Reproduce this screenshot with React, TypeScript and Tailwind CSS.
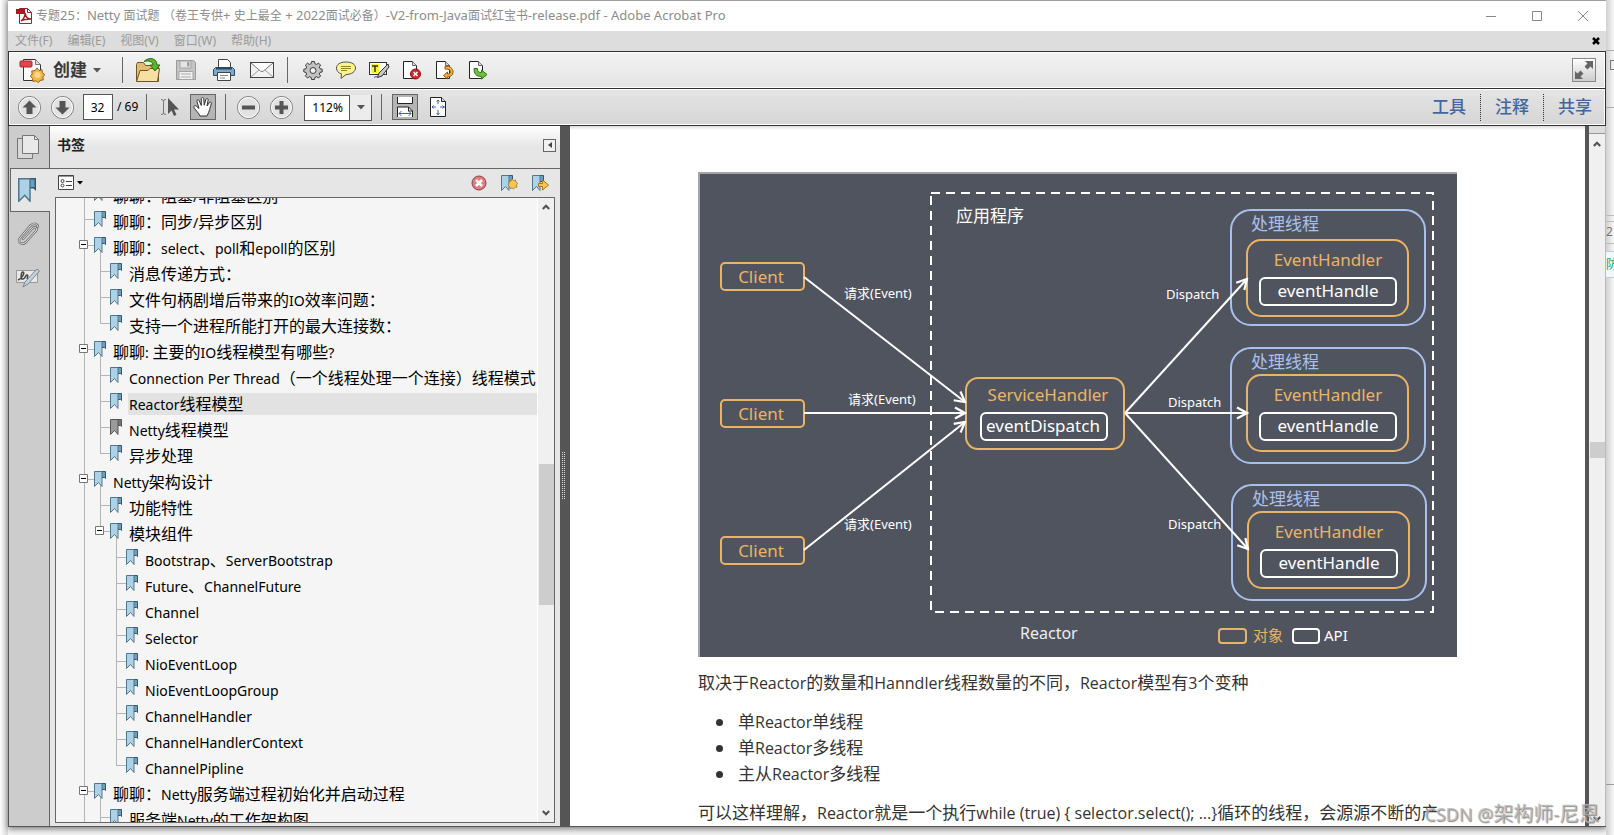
import type { ReactNode } from 'react';

interface Bookmark {
  title: string;
  depth: number;
  expanded?: boolean;
  last?: boolean;
  active?: boolean;
  muted?: boolean;
}

const MENUS = ['文件(F)', '编辑(E)', '视图(V)', '窗口(W)', '帮助(H)'];

const BOOKMARKS: Bookmark[] = [
  { title: '聊聊：阻塞/非阻塞区别', depth: 0 },
  { title: '聊聊：同步/异步区别', depth: 0 },
  { title: '聊聊：select、poll和epoll的区别', depth: 0, expanded: true },
  { title: '消息传递方式：', depth: 1 },
  { title: '文件句柄剧增后带来的IO效率问题：', depth: 1 },
  { title: '支持一个进程所能打开的最大连接数：', depth: 1, last: true },
  { title: '聊聊: 主要的IO线程模型有哪些?', depth: 0, expanded: true },
  { title: 'Connection Per Thread（一个线程处理一个连接）线程模式', depth: 1 },
  { title: 'Reactor线程模型', depth: 1, active: true },
  { title: 'Netty线程模型', depth: 1, muted: true },
  { title: '异步处理', depth: 1, last: true },
  { title: 'Netty架构设计', depth: 0, expanded: true },
  { title: '功能特性', depth: 1 },
  { title: '模块组件', depth: 1, expanded: true, last: true },
  { title: 'Bootstrap、ServerBootstrap', depth: 2 },
  { title: 'Future、ChannelFuture', depth: 2 },
  { title: 'Channel', depth: 2 },
  { title: 'Selector', depth: 2 },
  { title: 'NioEventLoop', depth: 2 },
  { title: 'NioEventLoopGroup', depth: 2 },
  { title: 'ChannelHandler', depth: 2 },
  { title: 'ChannelHandlerContext', depth: 2 },
  { title: 'ChannelPipline', depth: 2, last: true },
  { title: '聊聊：Netty服务端过程初始化并启动过程', depth: 0, expanded: true },
  { title: '服务端Netty的工作架构图', depth: 1 },
];

const VARIANTS = ['单Reactor单线程', '单Reactor多线程', '主从Reactor多线程'];

/* Latin runs get their own size next to the Han glyphs around them */
function MixedText({ text, latin }: { text: string; latin: string }) {
  return text.split(/([\x20-\x7e]+)/).map((part, i) =>
    i % 2 ? <span key={i} className={latin}>{part}</span> : part,
  );
}

/* ---------- icons ---------- */

function PdfIcon() {
  return (
    <svg width="16" height="16" viewBox="0 0 16 16">
      <path d="M3.500.5h8l4 4v11h-12z" fill="#fff" stroke="#8f2a30" />
      <path d="M11.500.5v4h4" fill="none" stroke="#8f2a30" />
      <path d="M0 1h9v5H0z" fill="#b3141d" />
      <path d="M5 13c3-2 4-5 4-8 1 4 2 6 6 6-4 0-7 0-10 2z" fill="none" stroke="#b3141d" strokeWidth="1.300" />
    </svg>
  );
}

function CreateIcon() {
  return (
    <svg width="26" height="26" viewBox="0 0 26 26">
      <path d="M4.500 2.500h12l5 5v16h-17z" fill="#fafafa" stroke="#333" />
      <path d="M16.500 2.500v5h5" fill="#ddd" stroke="#777" />
      <rect x="1" y="4" width="12" height="6" rx="1" fill="#e0474c" stroke="#b3242a" />
      <path d="m18 11 2 2.500 3-.8.300 3 2.500 1.800-2 2.500.5 3-3 .2-1.800 2.300-2.600-1.600-3 .5-.3-3-2.200-2 1.800-2.400-.5-3 3.200-.3z" fill="#f2b84c" stroke="#9a5f10" />
      <circle cx="18.500" cy="18" r="3" fill="#fbd98a" />
    </svg>
  );
}

function OpenIcon() {
  return (
    <svg width="26" height="26" viewBox="0 0 26 26">
      <path d="M1.500 24.500v-17l1-2h6l2 3h13v16z" fill="#e2bd72" stroke="#6e5426" />
      <path d="M1.500 24.500 5 13.500h8l2-2h9.500l-2 13z" fill="#f7dfa4" stroke="#6e5426" />
      <path d="M9 4.500c5-5 13-3.500 13 3.500h3l-5 6-5-6h3c0-3-4-5-9-3.500z" fill="#5cb531" stroke="#2b6a12" />
    </svg>
  );
}

function SaveIcon() {
  return (
    <svg width="22" height="22" viewBox="0 0 22 22">
      <path d="M1.500 1.500h17l2 2v17h-19z" fill="#c4c4c4" stroke="#9a9a9a" />
      <path d="M5 2h11v7H5z" fill="#e6e6e6" stroke="#a5a5a5" />
      <path d="M12 3h2.500v4.500H12z" fill="#a0a0a0" />
      <path d="M4 12.500h14v8H4z" fill="#f0f0f0" stroke="#a5a5a5" />
      <path d="M6 15h10M6 18h10" stroke="#aaa" />
    </svg>
  );
}

function PrintIcon() {
  return (
    <svg width="24" height="24" viewBox="0 0 24 24">
      <path d="M6.500 10V1.500h9l3 3V10" fill="#fff" stroke="#444" />
      <path d="M1.500 17.500v-6l2-2h17l2 2v6z" fill="#7ba8cf" stroke="#2e4c66" />
      <path d="M4 9.500h16v2H4z" fill="#31465a" />
      <path d="M5.500 14.500h13v8h-13z" fill="#fff" stroke="#444" />
      <path d="M8 17.500h8M8 20h5" stroke="#888" />
    </svg>
  );
}

function MailIcon() {
  return (
    <svg width="26" height="20" viewBox="0 0 26 20">
      <rect x="1.500" y="2.500" width="23" height="15" fill="#f2f2f2" stroke="#444" />
      <path d="m2 17 9-8m13 8-9-8" stroke="#999" />
      <path d="m2 3 9.500 8q1.500 1 3 0L24 3" fill="#fff" stroke="#777" />
    </svg>
  );
}

function GearIcon() {
  return (
    <svg width="20" height="20" viewBox="0 0 20 20">
      <g fill="#c2c2c2" stroke="#3c3c3c">
        <path d="M8.500 1.500h3l.4 2.200 1.700.7 1.900-1.300 2.100 2.100-1.300 1.900.7 1.600 2.200.5v2.700l-2.200.5-.7 1.600 1.300 1.900-2.100 2.100-1.900-1.300-1.700.7-.4 2.100h-3l-.4-2.100-1.700-.7-1.900 1.300-2.100-2.100 1.300-1.900-.7-1.600-2.200-.5V9.200L3 8.700l.7-1.600-1.300-1.900 2.100-2.100 1.900 1.300 1.700-.7z" />
        <circle cx="10" cy="10.500" r="3" fill="#f0f0f0" />
      </g>
    </svg>
  );
}

function CommentIcon() {
  return (
    <svg width="22" height="20" viewBox="0 0 22 20">
      <path d="M11 2c6 0 9.500 2.500 9.500 6s-3.500 6.500-9.500 6.500L6 18.500l.5-4.600C3 13 1.500 10.700 1.500 8 1.500 4.500 5 2 11 2z" fill="#fdf38a" stroke="#555" />
      <path d="M6 6.500h10M6 8.500h10M6 10.500h6" stroke="#8c8530" />
    </svg>
  );
}

function HighlightIcon() {
  return (
    <svg width="22" height="20" viewBox="0 0 22 20">
      <rect x="1.500" y="2.500" width="17" height="12" fill="#fff" stroke="#333" />
      <path d="M3 4h8v9H3z" fill="#fdf22f" />
      <path d="M4 6h6M7 6v6" stroke="#333" strokeWidth="1.500" />
      <path d="m20 4-9 9-1.500 4.500L14 16l7-9z" fill="#c6c6c6" stroke="#333" />
      <path d="M6 17.500q2-2 4 0" stroke="#555" fill="none" />
    </svg>
  );
}

function DocIcon({ children }: { children: ReactNode }) {
  return (
    <svg width="20" height="20" viewBox="0 0 20 20">
      <path d="M1.500 1.500h9l4 4v13h-13z" fill="#fff" stroke="#222" />
      <path d="M10.500 1.500v4h4" fill="#ddd" stroke="#666" />
      {children}
    </svg>
  );
}

function RoundIcon({ d }: { d: string }) {
  return (
    <svg width="25" height="25" viewBox="0 0 25 25">
      <circle cx="12.500" cy="12.500" r="11" fill="#e2e2e2" stroke="#777" />
      <circle cx="12.500" cy="12.500" r="10" fill="none" stroke="#fff" />
      <path d={d} fill="#555" />
    </svg>
  );
}

function CursorIcon() {
  return (
    <svg width="20" height="22" viewBox="0 0 20 22">
      <path d="M1 3.500q2.500 0 2.500 1.500v12q0 1.500-2.500 1.500M6 3.500Q3.500 3.500 3.500 5v12q0 1.500 2.500 1.500" fill="none" stroke="#777" />
      <path d="M8 2v16l3.500-3.500L14 20l2.500-1.200L14 13.500h5z" fill="#555" />
    </svg>
  );
}

function HandIcon() {
  return (
    <svg width="22" height="22" viewBox="0 0 22 22">
      <path
        d="M8 20c-1-3-4-5-6-8.500-.8-1.500 1-2.500 2.300-1.300L7 12.500 5 5.500c-.5-2 1.500-2.500 2.200-.8L9.300 9.500V3c0-2 2.300-2 2.500 0l.4 6.200 1.600-5.500c.5-1.900 2.600-1.400 2.300.5L15 10l2.200-3.200c1-1.500 2.700-.5 2.100 1-1 3-2 8-4.300 12.200z"
        fill="#fff"
        stroke="#333"
      />
    </svg>
  );
}

function FitWidthIcon() {
  return (
    <svg width="20" height="22" viewBox="0 0 20 22">
      <path d="M2.500 1v6.500h15V1" fill="#fff" stroke="#222" />
      <path d="M2.500 21v-10h11l4 4v6" fill="#fff" stroke="#222" />
      <path d="M13.500 11v4h4" fill="none" stroke="#222" />
      <path d="M4 17.500h12M6.500 15 4 17.500 6.500 20M13.500 15l2.500 2.500-2.500 2.500" fill="none" stroke="#3f5fb0" />
    </svg>
  );
}

function FitPageIcon() {
  return (
    <svg width="20" height="22" viewBox="0 0 20 22">
      <path d="M2.500 1.500h11l4 4v15h-15z" fill="#fff" stroke="#222" />
      <path d="M13.500 1.500v4h4" fill="#ddd" stroke="#222" />
      <path d="M10 4v4m0 6v5M4 11h4m4 0h5M8.500 5.500 10 4l1.500 1.500M8.500 17l1.500 1.500 1.500-1.500M5.500 9.500 4 11l1.500 1.500M14.500 9.500 16 11l-1.500 1.500" fill="none" stroke="#3f5fb0" />
    </svg>
  );
}

function ExpandIcon() {
  return (
    <svg width="22" height="22" viewBox="0 0 22 22">
      <path d="M12 2h8v8l-2.500-2.500-3 3-3-3 3-3zM2 12v8h8l-2.500-2.500 3-3-3-3-3 3z" fill="#666" />
    </svg>
  );
}

function Ribbon({ muted = false }: { muted?: boolean }) {
  return (
    <>
      <path d="M7 .5h4.500v7l-1-1H7z" fill={muted ? '#777' : '#6a9fc0'} stroke={muted ? '#555' : '#34566e'} />
      <path d="M.5 15.500V.5H8v15l-3.500-4z" fill={muted ? '#9b9b9b' : '#add2e8'} stroke={muted ? '#555' : '#51778f'} />
    </>
  );
}

function Caret() {
  return (
    <svg width="8" height="5" viewBox="0 0 8 5">
      <path d="M0 0h8L4 4.500z" fill="#555" />
    </svg>
  );
}

function Chevron({ down = false }: { down?: boolean }) {
  return (
    <svg width="8" height="6" viewBox="0 0 8 6">
      <path d={down ? 'M.8 1 4 4.300 7.200 1' : 'M.8 5 4 1.700 7.200 5'} fill="none" stroke="#505050" strokeWidth="2" />
    </svg>
  );
}

/* ---------- window chrome ---------- */

function TitleBar() {
  return (
    <header className="flex h-[31px] shrink-0 items-center border-t border-[#a0a0a0] bg-white pl-2">
      <PdfIcon />
      <h1 className="ml-1 grow truncate text-xs text-[#8c8c8c]">
        <MixedText
          text="专题25：Netty 面试题 （卷王专供+ 史上最全 + 2022面试必备）-V2-from-Java面试红宝书-release.pdf - Adobe Acrobat Pro"
          latin="text-[13px]"
        />
      </h1>
      <button aria-label="最小化" className="flex h-full w-[46px] items-center justify-center">
        <svg width="10" height="10"><path d="M0 5.500h10" stroke="#888" /></svg>
      </button>
      <button aria-label="最大化" className="flex h-full w-[46px] items-center justify-center">
        <svg width="10" height="10"><path d="M.5.5h9v9h-9z" fill="none" stroke="#888" /></svg>
      </button>
      <button aria-label="关闭" className="flex h-full w-[46px] items-center justify-center">
        <svg width="10" height="10"><path d="m0 0 10 10M10 0 0 10" stroke="#888" /></svg>
      </button>
    </header>
  );
}

function MenuBar() {
  return (
    <nav className="flex h-5 shrink-0 items-center gap-[15px] bg-[#ddd] pl-[7px] pr-[6px] text-xs text-[#9b9b9b]">
      {MENUS.map((menu) => (
        <button key={menu}>{menu}</button>
      ))}
      <button aria-label="关闭文档" className="ml-auto">
        <svg width="8" height="8"><path d="m1 1 6 6M7 1 1 7" stroke="#000" strokeWidth="2.500" /></svg>
      </button>
    </nav>
  );
}

function ToolButton({ label, children, wide = false, pressed = false }: { label: string; children: ReactNode; wide?: boolean; pressed?: boolean }) {
  return (
    <button aria-label={label} className={`flex shrink-0 justify-center ${wide ? 'w-[38px]' : 'w-[33px]'}`}>
      {pressed ? (
        <span className="flex size-[26px] items-center justify-center border border-[#666] bg-[#b4b4b4]">{children}</span>
      ) : (
        children
      )}
    </button>
  );
}

function Separator() {
  return <span className="h-[26px] w-px shrink-0 bg-[#666]" />;
}

function MainToolbar() {
  return (
    <div className="flex h-[36px] items-center border border-white bg-linear-to-b from-[#f3f3f3] to-[#e4e4e4] pl-[9px] pr-2">
      <button className="flex w-[103px] items-center text-[17px] font-bold text-[#3a3a3a]">
        <CreateIcon />
        <span className="ml-2 mr-[6px]">创建</span>
        <Caret />
      </button>
      <Separator />
      <div className="flex items-center px-[6px]">
        <ToolButton label="打开" wide><OpenIcon /></ToolButton>
        <ToolButton label="保存" wide><SaveIcon /></ToolButton>
        <ToolButton label="打印" wide><PrintIcon /></ToolButton>
        <ToolButton label="电子邮件" wide><MailIcon /></ToolButton>
      </div>
      <Separator />
      <div className="flex items-center pl-2">
        <ToolButton label="设置"><GearIcon /></ToolButton>
        <ToolButton label="附注"><CommentIcon /></ToolButton>
        <ToolButton label="高亮文本"><HighlightIcon /></ToolButton>
        <ToolButton label="删除页面">
          <DocIcon>
            <circle cx="13.500" cy="14" r="5" fill="#d8252c" stroke="#8a1015" />
            <path d="m11.500 12 4 4m0-4-4 4" stroke="#fff" strokeWidth="1.500" />
          </DocIcon>
        </ToolButton>
        <ToolButton label="旋转页面">
          <DocIcon>
            <path d="M10 6.500c5-1 8 2 8 5.500s-3 5-5.500 4.800V19L8.500 15.500l4-3.500v2c2 .2 3-.8 3-2.200 0-2-2-3-5.500-2.800z" fill="#f3b13c" stroke="#8f5a0c" />
          </DocIcon>
        </ToolButton>
        <ToolButton label="提取页面">
          <DocIcon>
            <path d="M6 8.500h3.500c0 3 1 4 4 4v-2.500l5.500 4.500-5.500 4.500v-2.500C8 16.500 6 13.500 6 8.500z" fill="#6cc03c" stroke="#2f6e14" />
          </DocIcon>
        </ToolButton>
      </div>
      <button aria-label="阅读模式" className="ml-auto border border-[#888] bg-linear-to-b from-white to-[#ccc]">
        <ExpandIcon />
      </button>
    </div>
  );
}

function PageToolbar() {
  return (
    <div className="flex h-[36px] items-center border border-white bg-linear-to-b from-[#e4e4e4] to-[#d6d6d6] pl-[3px] pr-3">
      <ToolButton label="上一页"><RoundIcon d="m12.500 5.500 7 7h-4V19h-6v-6.500h-4z" /></ToolButton>
      <ToolButton label="下一页"><RoundIcon d="m12.500 19.500 7-7h-4V6h-6v6.500h-4z" /></ToolButton>
      <label className="ml-1 mr-2 flex items-center gap-1 text-xs text-black">
        <input aria-label="页码" defaultValue="32" className="h-[26px] w-[30px] border border-[#555] bg-white pr-px text-center" />
        / 69
      </label>
      <Separator />
      <div className="flex items-center px-[6px]">
        <ToolButton label="选择工具"><CursorIcon /></ToolButton>
        <ToolButton label="手形工具" pressed><HandIcon /></ToolButton>
      </div>
      <Separator />
      <div className="flex items-center px-[6px]">
        <ToolButton label="缩小"><RoundIcon d="M6 10.500h13v4H6z" /></ToolButton>
        <ToolButton label="放大"><RoundIcon d="M6 10.500h4.500V6h4v4.500H19v4h-4.500V19h-4v-4.500H6z" /></ToolButton>
      </div>
      <div className="relative mr-[9px]">
        <select aria-label="缩放" defaultValue="112" className="h-[26px] w-[68px] appearance-none border border-[#555] bg-white pl-[7px] text-xs text-black">
          <option value="112">112%</option>
        </select>
        <span className="pointer-events-none absolute inset-y-px right-px flex w-[22px] items-center justify-center border-l border-[#555] bg-[#ececec]">
          <Caret />
        </span>
      </div>
      <Separator />
      <div className="flex items-center pl-[6px]">
        <ToolButton label="适合宽度" pressed><FitWidthIcon /></ToolButton>
        <ToolButton label="适合页面"><FitPageIcon /></ToolButton>
      </div>
      <div className="ml-auto flex items-center gap-[14px] text-[17px] font-medium text-[#44679b]">
        <button>工具</button>
        <span className="h-[27px] border-l border-dotted border-[#333]" />
        <button>注释</button>
        <span className="h-[27px] border-l border-dotted border-[#333]" />
        <button>共享</button>
      </div>
    </div>
  );
}

/* ---------- navigation pane ---------- */

function Rail() {
  return (
    <div className="flex w-[41px] shrink-0 flex-col border-r border-[#666] bg-[#ccc] pl-px">
      <button aria-label="页面缩略图" className="flex h-[42px] items-center justify-center pr-[3px]">
        <svg width="22" height="24" viewBox="0 0 22 24">
          <path d="M.5 3.500h15v20H.5z" fill="#d8d8d8" stroke="#777" />
          <path d="M5.500.5h12l4 4v14h-16z" fill="#e9e9e9" stroke="#777" />
          <path d="M17.500.5v4h4" fill="none" stroke="#777" />
        </svg>
      </button>
      <button aria-label="书签" className="-mr-px flex h-[44px] items-center border border-r-0 border-[#666] bg-[#e6e6e6] pl-[7px]">
        <svg width="18" height="24" viewBox="0 0 12 16"><Ribbon /></svg>
      </button>
      <button aria-label="附件" className="flex h-[44px] items-center justify-center pr-[3px]">
        <svg width="22" height="24" viewBox="0 0 22 24" fill="none" strokeLinecap="round">
          <path d="m6 17 10-11c2-2 5 .5 3 3L9 20c-4 4-9 0-6-4L13 4c4-4 8-2 8 1" stroke="#777" strokeWidth="2.500" />
          <path d="m6 17 10-11c2-2 5 .5 3 3L9 20c-4 4-9 0-6-4L13 4c4-4 8-2 8 1" stroke="#ddd" />
        </svg>
      </button>
      <button aria-label="签名" className="flex h-[44px] items-center justify-center pr-[3px]">
        <svg width="24" height="20" viewBox="0 0 24 20">
          <path d="M.5 2.500h21v12H.5z" fill="#e8e8e8" stroke="#999" />
          <path d="M2 12c5-2 7-8 5-8s-3 8 0 7 2-4 4-4-1 4 1 4" fill="none" stroke="#444" strokeWidth="1.500" />
          <path d="m21 1 2.500 2L12 16l-5 3 2-5z" fill="#c4d3dc" stroke="#758793" />
        </svg>
      </button>
    </div>
  );
}

/* one 16px column of the connector lines in front of a bookmark */
function Connector({ own, last, visible, expanded }: { own: boolean; last: boolean; visible: boolean; expanded: boolean }) {
  return (
    <svg width="16" height="26" viewBox="0 0 16 26" className="shrink-0">
      {visible && <path d={own ? `M6.500 0V${last ? 11 : 26}M6 10.500h10` : 'M6.500 0v26'} fill="none" stroke="#b4b4b4" />}
      {own && expanded && (
        <>
          <path d="M1.500 5.500h8v8h-8z" fill="#fff" stroke="#777" />
          <path d="M3 9.500h5" stroke="#000" />
        </>
      )}
    </svg>
  );
}

function BookmarkRow({ item }: { item: Bookmark }) {
  const columns = Array.from({ length: item.depth + 1 }, (_, i) => i);

  return (
    <li className="flex h-[26px] shrink-0 items-center">
      {columns.map((col) => (
        <Connector
          key={col}
          own={col === item.depth}
          last={!!item.last}
          visible={col === 0 || col === item.depth}
          expanded={!!item.expanded}
        />
      ))}
      <svg width="13" height="26" viewBox="0 0 13 26" className="shrink-0">
        {item.expanded && <path d="M6.500 15v11" stroke="#b4b4b4" />}
        <g transform="translate(0 2)"><Ribbon muted={item.muted} /></g>
      </svg>
      <a
        href="#"
        className={`ml-[5px] flex h-[22px] grow items-center overflow-hidden whitespace-nowrap pl-px ${item.active ? 'bg-[#e2e2e2]' : ''}`}
      >
        <span><MixedText text={item.title} latin="text-sm" /></span>
      </a>
    </li>
  );
}

function BookmarksPane() {
  return (
    <aside className="flex w-[510px] shrink-0 flex-col bg-[#e6e6e6]">
      <div className="flex h-[43px] shrink-0 items-center justify-between border-b border-[#666] bg-linear-to-b from-white via-[#e6e6e6] to-[#e4e4e4] pb-[4px] pl-[7px] pr-1">
        <h2 className="text-sm font-bold text-[#222]">书签</h2>
        <button aria-label="折叠" className="flex size-[13px] items-center justify-center border border-[#666] bg-[#f0f0f0]">
          <svg width="4" height="6"><path d="M4 0v6L0 3z" fill="#444" /></svg>
        </button>
      </div>
      <div className="flex h-[28px] shrink-0 items-center pl-2 pr-[11px]">
        <button aria-label="选项" className="flex items-center gap-[3px]">
          <svg width="16" height="16" viewBox="0 0 16 16">
            <path d="M.5.5h15v14H.5z" fill="#fff" stroke="#444" />
            <path d="M1 1.500h14" stroke="#999" />
            <circle cx="4.500" cy="6" r="1.500" fill="none" stroke="#444" />
            <circle cx="4.500" cy="10.500" r="1.500" fill="none" stroke="#444" />
            <path d="M8 6.500h6M8 10.500h6" stroke="#444" />
          </svg>
          <svg width="6" height="4"><path d="M0 0h6L3 3.500z" fill="#000" /></svg>
        </button>
        <div className="ml-auto flex items-center gap-[14px]">
          <button aria-label="删除书签">
            <svg width="16" height="16" viewBox="0 0 16 16">
              <circle cx="8" cy="8" r="7" fill="#e27c80" stroke="#8c4144" />
              <path d="m5 5 6 6m0-6-6 6" stroke="#fff" strokeWidth="2.500" />
            </svg>
          </button>
          <button aria-label="新建书签">
            <svg width="17" height="17" viewBox="0 0 17 17">
              <Ribbon />
              <path d="m11 4 1.500 1.500 2-.5.3 2 1.700 1.300-1 1.700.5 2-2 .3L12.500 14 11 13l-2 .5-.5-2L7 10l1-1.500-.2-2L10 6z" fill="#f6c650" stroke="#a5741a" strokeWidth=".8" />
            </svg>
          </button>
          <button aria-label="展开当前书签">
            <svg width="17" height="17" viewBox="0 0 17 17">
              <Ribbon />
              <path d="M6.500 8.500h4V5l6 5-6 5v-3.500h-4z" fill="#f6c650" stroke="#a5741a" />
            </svg>
          </button>
        </div>
      </div>
      <div className="mx-[5px] mb-[3px] flex min-h-0 grow border border-[#666] bg-[#f5f5f5]">
        <div className="min-w-0 grow overflow-hidden border-r border-white">
          <ul className="-mt-[15px] flex flex-col pl-[22px] text-base text-black">
            {BOOKMARKS.map((item) => (
              <BookmarkRow key={item.title} item={item} />
            ))}
          </ul>
        </div>
        <div className="flex w-4 shrink-0 flex-col items-center bg-[#f0f0f0] py-[6px]">
          <Chevron />
          <span className="grow-[252]" />
          <span className="h-[141px] w-[15px] bg-[#cdcdcd]" />
          <span className="grow-[204]" />
          <Chevron down />
        </div>
      </div>
    </aside>
  );
}

function Splitter() {
  return (
    <div className="flex w-[10px] shrink-0 items-center bg-[#555] pl-[2px]">
      <svg width="4" height="48">
        <path d="M.5 0v48M2.500 0v48" stroke="#ddd" strokeDasharray="1 1" />
      </svg>
    </div>
  );
}

/* ---------- document ---------- */

function ClientNode({ y }: { y: number }) {
  return (
    <g>
      <rect x="23" y={y} width="83" height="27" rx="4" fill="none" stroke="#e9b465" strokeWidth="2" />
      <text x="63" y={y + 20} fill="#e9b465" textAnchor="middle">Client</text>
    </g>
  );
}

function ThreadNode({ x, y, top }: { x: number; y: number; top: number }) {
  return (
    <g fill="none" strokeWidth="2">
      <rect x={x} y={y} width="194" height="115" rx="20" stroke="#a9c0ee" />
      <text x={x + 20} y={y + 20} fill="#a9c0ee">处理线程</text>
      <rect x={x + 16} y={top} width="161" height="76" rx="14" stroke="#e9b465" />
      <text x={x + 97} y={top + 26} fill="#e9b465" textAnchor="middle">EventHandler</text>
      <rect x={x + 29} y={top + 38} width="136" height="27" rx="5" stroke="#fff" />
      <text x={x + 97} y={top + 57} fill="#fff" textAnchor="middle">eventHandle</text>
    </g>
  );
}

function ReactorDiagram() {
  return (
    <svg viewBox="0 0 759 485" className="block w-full bg-[#50545f] font-['Noto_Sans','Noto_Sans_CJK_SC',sans-serif] text-[17px] [&_text]:stroke-none">
      <defs>
        <marker id="arrow" viewBox="0 0 14 14" markerWidth="14" markerHeight="14" refX="12" refY="7" orient="auto" markerUnits="userSpaceOnUse">
          <path d="M2 1.500 12 7 2 12.500" fill="none" stroke="#fff" strokeWidth="2.200" />
        </marker>
      </defs>
      <path d="M1 485V1h758" fill="none" stroke="#a2a4aa" strokeWidth="2" />
      <rect x="233" y="21" width="502" height="419" fill="none" stroke="#fff" strokeWidth="2" strokeDasharray="9 6" />
      <text x="258" y="50" fill="#fff">应用程序</text>

      <ClientNode y={91} />
      <ClientNode y={228} />
      <ClientNode y={365} />

      <rect x="268" y="206" width="158" height="71" rx="12" fill="none" stroke="#e9b465" strokeWidth="2" />
      <text x="350" y="229" fill="#e9b465" textAnchor="middle">ServiceHandler</text>
      <rect x="283" y="241" width="126" height="27" rx="5" fill="none" stroke="#fff" strokeWidth="2" />
      <text x="345" y="260" fill="#fff" textAnchor="middle">eventDispatch</text>

      <ThreadNode x={533} y={38} top={68} />
      <ThreadNode x={533} y={176} top={203} />
      <ThreadNode x={534} y={313} top={340} />

      <g stroke="#fff" strokeWidth="2">
        <path d="m106 105 161 125" markerEnd="url(#arrow)" />
        <path d="M106 241h161" markerEnd="url(#arrow)" />
        <path d="m106 378 161-128" markerEnd="url(#arrow)" />
        <path d="m427 241 122-134" markerEnd="url(#arrow)" />
        <path d="M427 241h122" markerEnd="url(#arrow)" />
        <path d="m427 241 123 136" markerEnd="url(#arrow)" />
      </g>

      <g fill="#fff" className="text-[13px]">
        <text x="146" y="126">请求(Event)</text>
        <text x="150" y="232">请求(Event)</text>
        <text x="146" y="357">请求(Event)</text>
        <text x="468" y="127">Dispatch</text>
        <text x="470" y="235">Dispatch</text>
        <text x="470" y="357">Dispatch</text>
      </g>

      <text x="322" y="467" fill="#eee" className="text-base">Reactor</text>
      <rect x="521" y="457" width="27" height="14" rx="3" fill="none" stroke="#e9b465" strokeWidth="2" />
      <text x="555" y="469" fill="#e9b465" className="text-[15px]">对象</text>
      <rect x="595" y="457" width="26" height="14" rx="3" fill="none" stroke="#fff" strokeWidth="2" />
      <text x="626" y="469" fill="#fff" className="text-[15px]">API</text>
    </svg>
  );
}

function DocumentView() {
  return (
    <main className="relative flex min-w-0 grow">
      <article className="min-w-0 grow overflow-hidden bg-white bg-linear-to-b from-[#ddd] to-white to-[4px] px-32 pt-[46px] font-['Open_Sans','Noto_Sans_CJK_SC',sans-serif] text-[17px] leading-[26px] text-[#333]">
        <ReactorDiagram />
        <div className="flex flex-col gap-[13px] whitespace-nowrap pt-[13px]">
          <p>
            <MixedText text="取决于Reactor的数量和Hanndler线程数量的不同，Reactor模型有3个变种" latin="text-[16px]" />
          </p>
          <ul>
            {VARIANTS.map((variant) => (
              <li key={variant} className="flex items-center gap-[15px] pl-[18px]">
                <span className="size-[7px] rounded-full bg-[#333]" />
                <span><MixedText text={variant} latin="text-[16px]" /></span>
              </li>
            ))}
          </ul>
          <p>
            <MixedText
              text="可以这样理解，Reactor就是一个执行while (true) { selector.select(); ...}循环的线程，会源源不断的产"
              latin="text-[16px]"
            />
          </p>
        </div>
      </article>
      <div className="w-1 shrink-0 bg-[#555]" />
      <div className="flex w-[17px] shrink-0 flex-col items-center border-r border-[#bbb] bg-[#f0f0f0] pb-1">
        <span className="mb-[7px] h-2 w-full border-b border-[#999] bg-[#ddd]" />
        <Chevron />
        <span className="grow-[294]" />
        <span className="h-4 w-[15px] bg-[#cdcdcd]" />
        <span className="grow-[356]" />
        <Chevron down />
      </div>
      <p className="absolute bottom-0 right-[7px] text-xl leading-6 text-[#b8b8b8]/80 [text-shadow:1px_1px_1px_#888]">
        <MixedText text="CSDN @架构师-尼恩" latin="text-[18px]" />
      </p>
    </main>
  );
}

/* sliver of the window that sits behind this one */
function BackgroundWindow() {
  return (
    <div aria-hidden="true" className="flex w-2 shrink-0 flex-col overflow-hidden bg-linear-to-r from-[#d0d0d0] to-[#f8f8f8] text-xs">
      <span className="h-[50px] shrink-0" />
      <span className="flex h-[58px] shrink-0 border-y border-[#aaa] pl-1 pt-[9px]">
        <span className="h-[10px] w-[10px] shrink-0 border border-[#777]" />
      </span>
      <span className="h-[108px] shrink-0 border-b border-[#bbb]" />
      <span className="h-[6px] shrink-0 border-b border-[#bbb]" />
      <span className="h-[22px] shrink-0 border-b border-[#bbb] leading-[20px] text-[#777]">2</span>
      <span className="mt-[7px] h-[27px] shrink-0 border-y border-[#b8cde0] bg-[#f2f7fb] leading-[25px] text-[#18a558]">防</span>
      <span className="h-[507px] shrink-0 border-b border-[#999]" />
    </div>
  );
}

export default function App() {
  return (
    <div className="flex h-screen overflow-hidden bg-[#f4f4f4] font-['Noto_Sans','Noto_Sans_CJK_SC',sans-serif]">
      <div className="w-2 shrink-0 bg-linear-to-r from-white to-[#d8d8d8]" />
      <div className="mb-2 flex min-w-0 grow flex-col shadow-[0_2px_6px_rgba(0,0,0,0.5)]">
        <TitleBar />
        <MenuBar />
        <div className="flex shrink-0 flex-col gap-px border border-[#333] bg-[#333]">
          <MainToolbar />
          <PageToolbar />
        </div>
        <div className="flex min-h-0 grow border-b border-l border-[#555]">
          <Rail />
          <BookmarksPane />
          <Splitter />
          <DocumentView />
        </div>
      </div>
      <BackgroundWindow />
    </div>
  );
}
